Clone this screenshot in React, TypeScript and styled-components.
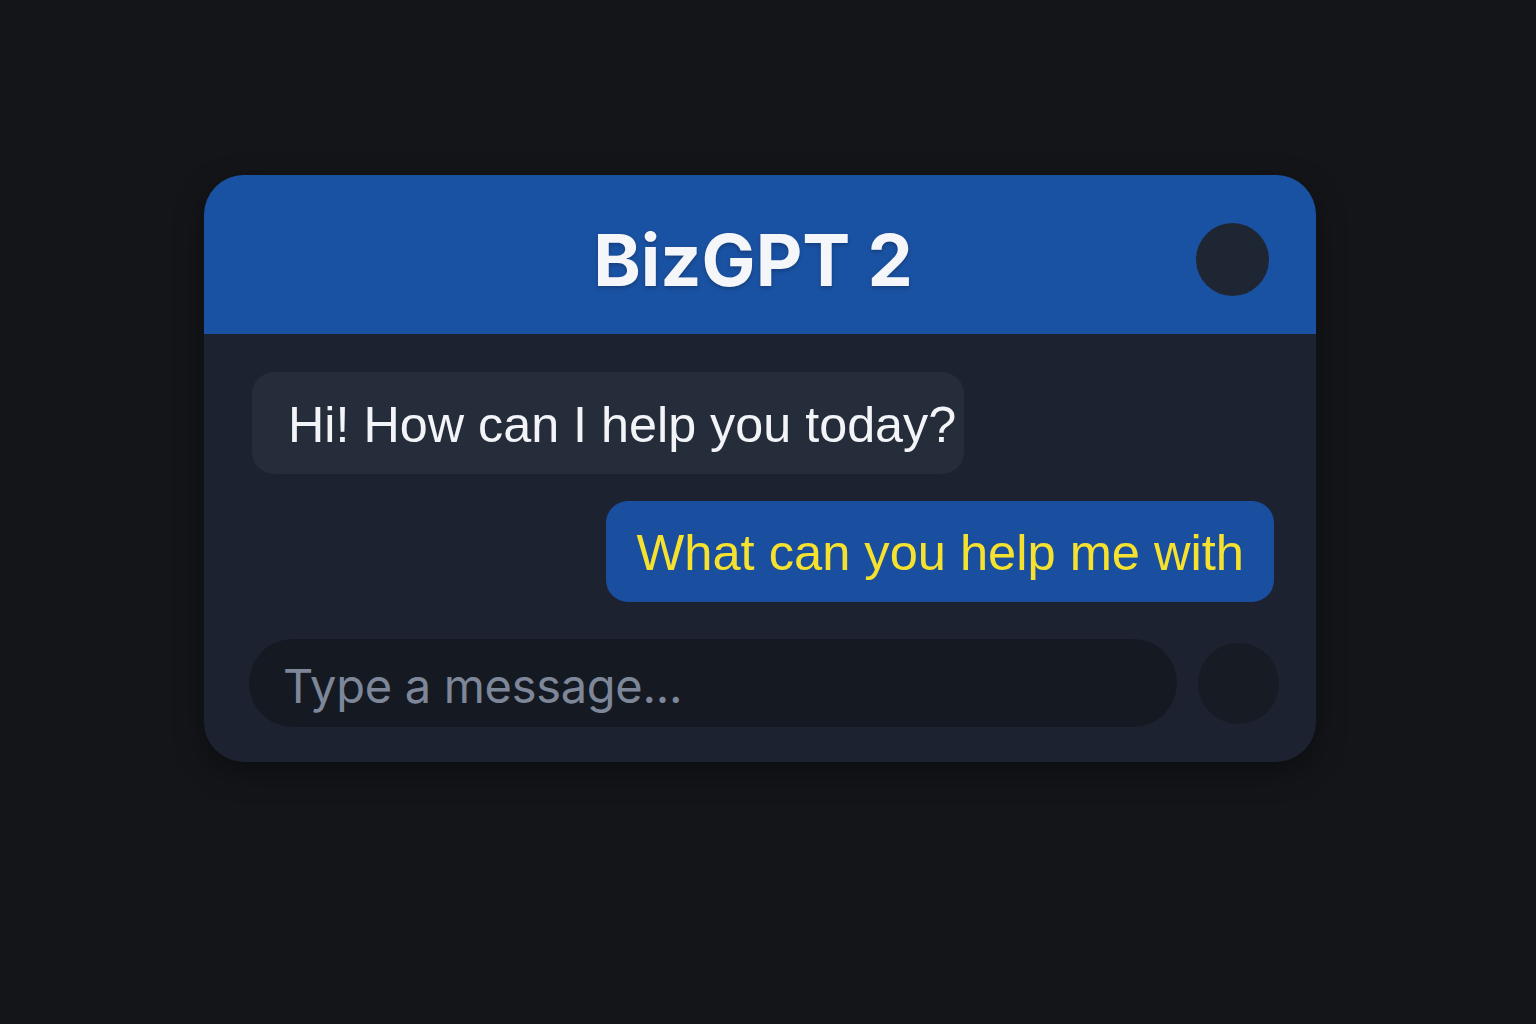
import React from "react";
import styled, { createGlobalStyle } from "styled-components";

const Global = createGlobalStyle`
  html, body { margin: 0; padding: 0; background: #131519; }
  body { width: 1536px; height: 1024px; overflow: hidden; }
`;

const Page = styled.div`
  width: 1536px;
  height: 1024px;
  background: #131519;
  padding: 175px 0 0 204px;
  box-sizing: border-box;
  display: flex;
  align-items: flex-start;
`;

const Card = styled.div`
  width: 1112px;
  height: 587px;
  border-radius: 40px;
  overflow: hidden;
  background: #1d2230;
  display: flex;
  flex-direction: column;
  box-shadow: 0 10px 30px rgba(0, 0, 0, 0.35);
`;

const Header = styled.div`
  height: 159px;
  flex-shrink: 0;
  background: #1a52a3;
  display: grid;
  grid-template-columns: 1fr auto 1fr;
  align-items: center;
`;

const Title = styled.h1`
  grid-column: 2;
  margin: 10px 14px 0 0;
  font-family: Inter, "Liberation Sans", sans-serif;
  font-weight: 700;
  font-size: 72px;
  line-height: 1;
  color: #f4f6fa;
  text-shadow: 0 2px 4px rgba(0, 0, 0, 0.25);
`;

const HeaderDot = styled.div`
  grid-column: 3;
  justify-self: end;
  margin: 9px 47px 0 0;
  width: 73px;
  height: 73px;
  border-radius: 50%;
  background: #1f2633;
`;

const Body = styled.div`
  flex: 1;
  display: flex;
  flex-direction: column;
  padding: 38px 37px 0 45px;
`;

const Bubble = styled.div<{ $mine?: boolean }>`
  align-self: ${(p) => (p.$mine ? "flex-end" : "flex-start")};
  margin-left: ${(p) => (p.$mine ? "0" : "3px")};
  margin-right: ${(p) => (p.$mine ? "5px" : "0")};
  height: ${(p) => (p.$mine ? "101px" : "102px")};
  box-sizing: border-box;
  display: flex;
  align-items: center;
  padding: ${(p) => (p.$mine ? "2px 30px 0 31px" : "2px 8px 0 36px")};
  border-radius: 22px;
  background: ${(p) => (p.$mine ? "#1a4e9e" : "#262d3a")};
  color: ${(p) => (p.$mine ? "#f6e22e" : "#f2f4f8")};
  font-family: "Liberation Sans", Arial, sans-serif;
  font-size: ${(p) => (p.$mine ? "50.6px" : "50.3px")};
  white-space: nowrap;
  margin-bottom: 27px;
`;

const InputRow = styled.div`
  display: flex;
  align-items: center;
  gap: 21px;
  margin-top: 10px;
`;

const Input = styled.div`
  flex: 1;
  height: 88px;
  border-radius: 44px;
  background: #151a22;
  display: flex;
  align-items: center;
  padding: 4px 0 0 34px;
  box-sizing: border-box;
  font-family: Inter, "Liberation Sans", sans-serif;
  font-size: 47px;
  letter-spacing: -0.3px;
  color: #7d8799;
`;

const Send = styled.div`
  width: 81px;
  height: 81px;
  border-radius: 50%;
  background: #161b24;
`;

export default function App() {
  return (
    <>
      <Global />
      <Page>
        <Card>
          <Header>
            <Title>BizGPT 2</Title>
            <HeaderDot />
          </Header>
          <Body>
            <Bubble>Hi! How can I help you today?</Bubble>
            <Bubble $mine>What can you help me with</Bubble>
            <InputRow>
              <Input>Type a message...</Input>
              <Send />
            </InputRow>
          </Body>
        </Card>
      </Page>
    </>
  );
}
